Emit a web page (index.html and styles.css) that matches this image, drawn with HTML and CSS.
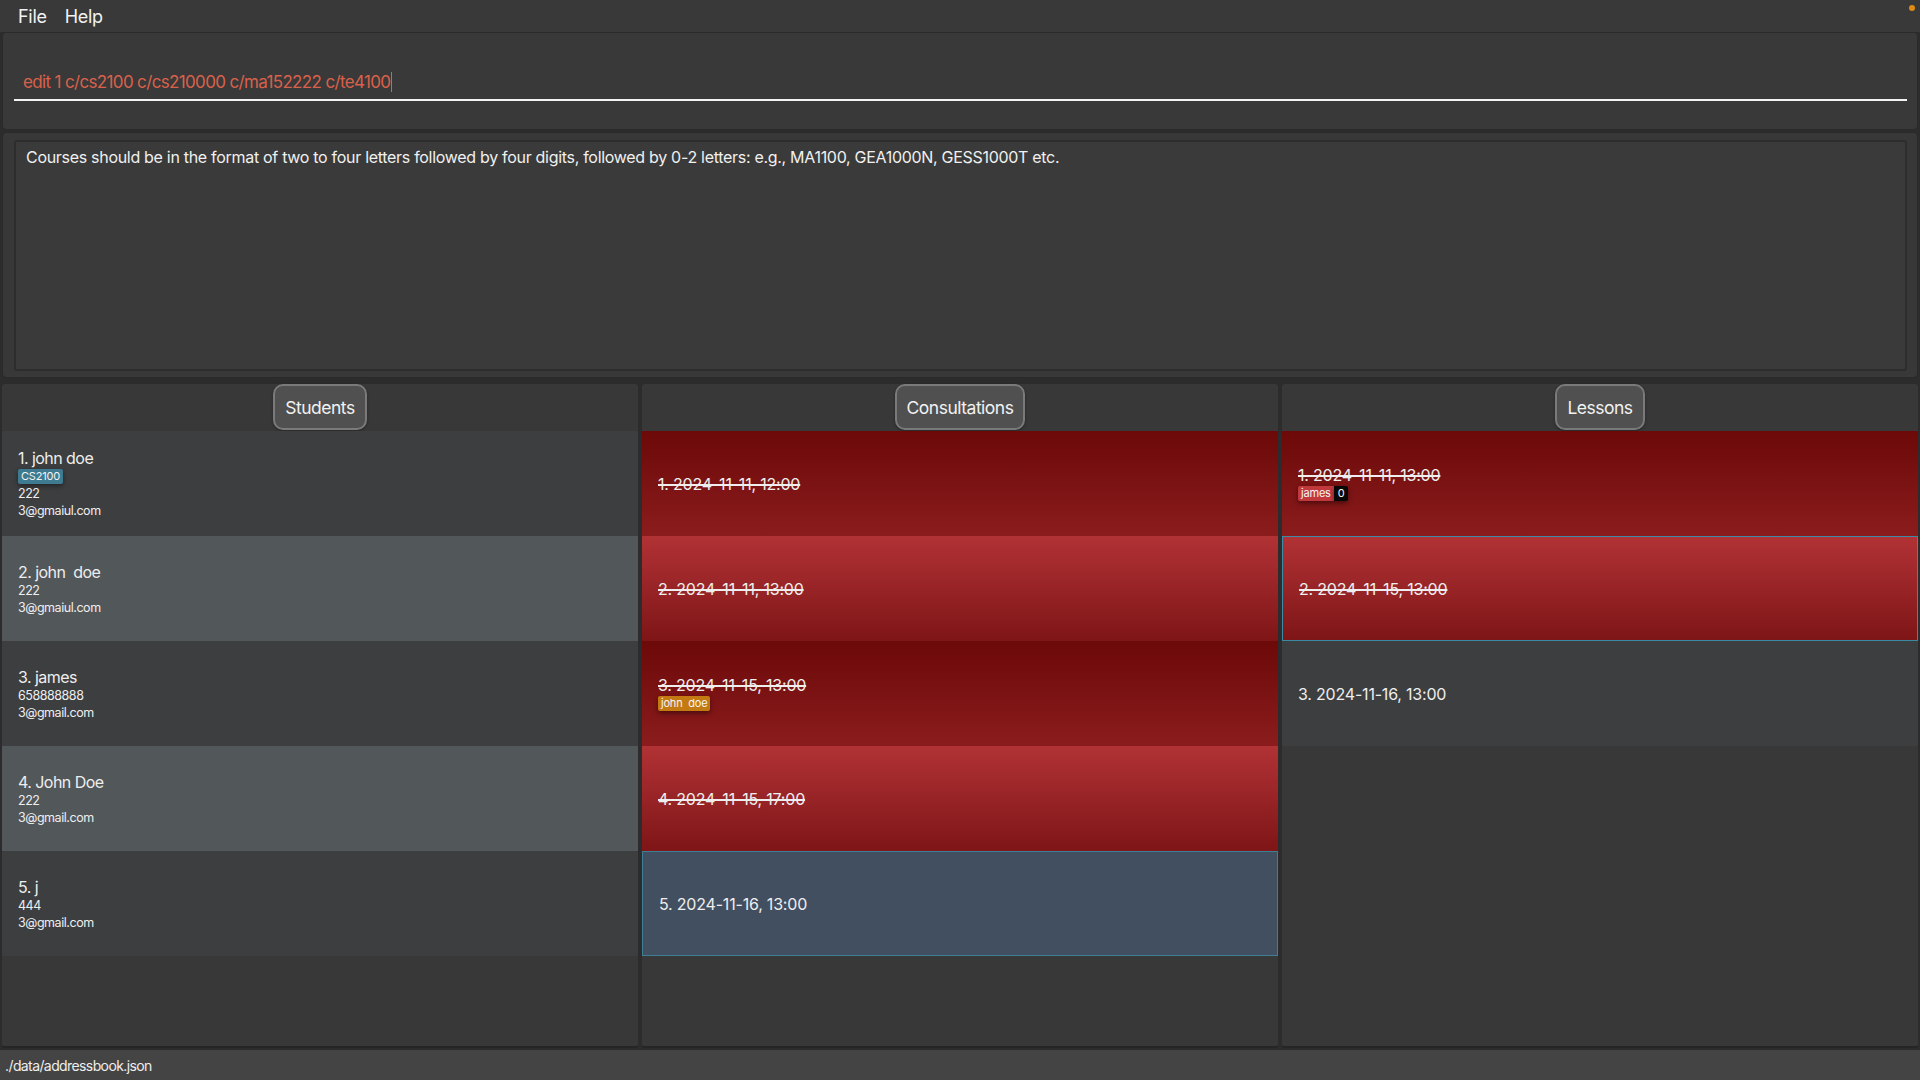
FILE: index.html
```html
<!DOCTYPE html>
<html>
<head>
<meta charset="utf-8">
<link rel="stylesheet" href="styles.css">
</head>
<body>
<div class="app">
  <div class="menubar">
    <span class="menu">File</span>
    <span class="menu">Help</span>
    <span class="dot"></span>
  </div>
  <div class="cmd-panel">
    <div class="cmd-field"><span class="cmd-text">edit 1 c/cs2100 c/cs210000 c/ma152222 c/te4100</span><span class="caret"></span></div>
  </div>
  <div class="result-panel">
    <div class="result-box">Courses should be in the format of two to four letters followed by four digits, followed by 0-2 letters: e.g., MA1100, GEA1000N, GESS1000T etc.</div>
  </div>
  <div class="lists">
    <div class="col">
      <div class="col-head"><span class="btn">Students</span></div>
      <div class="rows">
        <div class="row odd">
          <div class="name">1. john doe</div>
          <div class="tags"><span class="tag tag-blue">CS2100</span></div>
          <div class="small">222</div>
          <div class="small">3@gmaiul.com</div>
        </div>
        <div class="row even">
          <div class="name">2. john&nbsp; doe</div>
          <div class="small">222</div>
          <div class="small">3@gmaiul.com</div>
        </div>
        <div class="row odd">
          <div class="name">3. james</div>
          <div class="small">658888888</div>
          <div class="small">3@gmail.com</div>
        </div>
        <div class="row even">
          <div class="name">4. John Doe</div>
          <div class="small">222</div>
          <div class="small">3@gmail.com</div>
        </div>
        <div class="row odd">
          <div class="name">5. j</div>
          <div class="small">444</div>
          <div class="small">3@gmail.com</div>
        </div>
      </div>
    </div>
    <div class="col">
      <div class="col-head"><span class="btn">Consultations</span></div>
      <div class="rows">
        <div class="row red-dark"><div class="name date done">1. 2024-11-11, 12:00</div></div>
        <div class="row red-light"><div class="name date done">2. 2024-11-11, 13:00</div></div>
        <div class="row red-dark">
          <div class="name date done">3. 2024-11-15, 13:00</div>
          <div class="tags"><span class="tag tag-orange">john&nbsp; doe</span></div>
        </div>
        <div class="row red-light"><div class="name date done">4. 2024-11-15, 17:00</div></div>
        <div class="row selected-blue"><div class="name date">5. 2024-11-16, 13:00</div></div>
      </div>
    </div>
    <div class="col">
      <div class="col-head"><span class="btn">Lessons</span></div>
      <div class="rows">
        <div class="row red-dark">
          <div class="name date done">1. 2024-11-11, 13:00</div>
          <div class="tags"><span class="tag tag-red">james</span><span class="tag tag-black">0</span></div>
        </div>
        <div class="row red-light selected"><div class="name date done">2. 2024-11-15, 13:00</div></div>
        <div class="row odd"><div class="name date">3. 2024-11-16, 13:00</div></div>
      </div>
    </div>
  </div>
  <div class="statusbar">./data/addressbook.json</div>
</div>
</body>
</html>
```

FILE: styles.css
```css
* { box-sizing: border-box; }
html, body {
  margin: 0;
  padding: 0;
  width: 1920px;
  height: 1080px;
  overflow: hidden;
  background: #2c2c2c;
  font-family: Inter, "Noto Sans", "Liberation Sans", sans-serif;
  color: #f0f0f0;
}
.app {
  display: flex;
  flex-direction: column;
  height: 1080px;
}
.menubar {
  height: 32px;
  background: #393939;
  display: flex;
  align-items: center;
  padding-left: 18px;
  gap: 18px;
  font-size: 18px;
  color: #f2f2f2;
  position: relative;
}
.menu { letter-spacing: -0.3px; }
.dot {
  position: absolute;
  right: 5px;
  top: 5px;
  width: 6px;
  height: 6px;
  border-radius: 50%;
  background: #e08a14;
}
.cmd-panel {
  height: 98px;
  margin: 0 2px;
  background: #393939;
  border: 1px solid #2a2a2a;
  border-radius: 4px;
  padding: 31px 10px 0 11px;
}
.cmd-field {
  height: 37px;
  border-bottom: 2px solid #f4f4f4;
  display: flex;
  align-items: center;
  padding-left: 9px;
  font-size: 17px;
  color: #d9614b;
  letter-spacing: -0.65px;
}
.caret {
  display: inline-block;
  width: 1px;
  height: 20px;
  background: #d9614b;
  margin-left: 1px;
}
.result-panel {
  height: 246px;
  margin: 2px 2px 0;
  background: #383838;
  border: 1px solid #2a2a2a;
  border-radius: 4px;
  padding: 7px 10px 6px 11px;
}
.result-box {
  height: 100%;
  background: #3a3a3a;
  border: 2px solid #2d2d2d;
  border-radius: 3px;
  padding: 5px 10px;
  font-size: 16px;
  color: #f0f0f0;
  letter-spacing: -0.3px;
}
.lists {
  flex: 1;
  display: flex;
  gap: 4px;
  margin: 6px 2px 0;
  min-height: 0;
}
.col {
  flex: 1;
  background: #383838;
  border-radius: 3px;
  display: flex;
  flex-direction: column;
  border-bottom: 2px solid #252525;
}
.col-head {
  height: 47px;
  display: flex;
  justify-content: center;
  align-items: flex-start;
}
.btn {
  height: 46px;
  padding: 0 10px;
  display: flex;
  align-items: center;
  background: #505050;
  border: 2px solid #7a7a7a;
  border-radius: 10px;
  font-size: 17.5px;
  color: #f2f2f2;
  letter-spacing: -0.5px;
  box-shadow: 0 1px 3px rgba(0,0,0,0.35);
}
.rows {
  display: flex;
  flex-direction: column;
}
.row {
  height: 105px;
  padding: 0 16px;
  display: flex;
  flex-direction: column;
  justify-content: center;
}
.odd { background: #3d3e40; }
.even { background: #52575a; }
.red-dark { background: linear-gradient(#6c0909, #8b1c1d); }
.red-light { background: linear-gradient(#b13235, #7e1517); }
.selected { border: 1px solid #3d8aa6; }
.selected-blue { background: #424f61; border: 1px solid #3e7f95; }
.name {
  font-size: 16px;
  color: #eeeeee;
  letter-spacing: -0.55px;
  line-height: 20px;
}
.date { letter-spacing: -0.2px; }
.done {
  text-decoration: line-through;
  text-decoration-thickness: 1.5px;
}
.small {
  font-size: 12.5px;
  color: #eeeeee;
  line-height: 17px;
  letter-spacing: -0.45px;
}
.tags {
  display: flex;
  margin: 1px 0 1px;
}
.tag {
  font-size: 11px;
  line-height: 15px;
  padding: 0 3px;
  border-radius: 2px;
  color: #f4f4f4;
  letter-spacing: -0.2px;
  box-shadow: 0 2px 5px rgba(0,0,0,0.45);
}
.tag-blue { background: #3e7b91; }
.tag-orange { background: #c47a12; }
.tag-red { background: #c2393d; border-radius: 2px 0 0 2px; }
.tag-black { background: #080808; border-radius: 0 2px 2px 0; padding: 0 4px; }
.statusbar {
  height: 30px;
  background: #444444;
  display: flex;
  align-items: center;
  padding-left: 5px;
  font-size: 14px;
  color: #eeeeee;
  letter-spacing: -0.6px;
  margin-top: 2px;
}
```
